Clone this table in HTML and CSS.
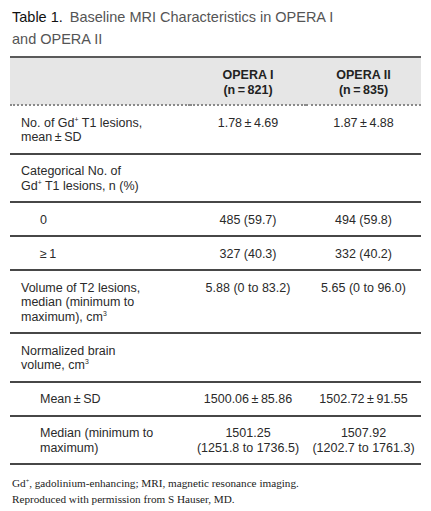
FILE: index.html
```html
<!DOCTYPE html>
<html lang="en">
<head>
<meta charset="utf-8">
<title>Table 1. Baseline MRI Characteristics in OPERA I and OPERA II</title>
<link rel="stylesheet" href="styles.css">
</head>
<body>
<div class="page">
  <h1 class="title"><span class="label">Table 1.</span><span class="t1">Baseline MRI Characteristics in OPERA I</span><br><span class="t2">and OPERA II</span></h1>
  <table class="data">
    <colgroup>
      <col class="c1"><col class="c2"><col class="c3">
    </colgroup>
    <thead>
      <tr>
        <th></th>
        <th>OPERA I<br>(n&#8201;=&#8201;821)</th>
        <th>OPERA II<br>(n&#8201;=&#8201;835)</th>
      </tr>
    </thead>
    <tbody>
      <tr>
        <td>No. of Gd<sup>+</sup> T1 lesions,<br>mean&#8201;±&#8201;SD</td>
        <td class="num">1.78&#8201;±&#8201;4.69</td>
        <td class="num">1.87&#8201;±&#8201;4.88</td>
      </tr>
      <tr>
        <td>Categorical No. of<br>Gd<sup>+</sup> T1 lesions, n (%)</td>
        <td class="num"></td>
        <td class="num"></td>
      </tr>
      <tr>
        <td class="sub">0</td>
        <td class="num">485 (59.7)</td>
        <td class="num">494 (59.8)</td>
      </tr>
      <tr>
        <td class="sub">≥&#8201;1</td>
        <td class="num">327 (40.3)</td>
        <td class="num">332 (40.2)</td>
      </tr>
      <tr>
        <td>Volume of T2 lesions,<br>median (minimum to<br>maximum), cm<sup>3</sup></td>
        <td class="num">5.88 (0 to 83.2)</td>
        <td class="num">5.65 (0 to 96.0)</td>
      </tr>
      <tr>
        <td>Normalized brain<br>volume, cm<sup>3</sup></td>
        <td class="num"></td>
        <td class="num"></td>
      </tr>
      <tr>
        <td class="sub">Mean&#8201;±&#8201;SD</td>
        <td class="num">1500.06&#8201;±&#8201;85.86</td>
        <td class="num">1502.72&#8201;±&#8201;91.55</td>
      </tr>
      <tr>
        <td class="sub">Median (minimum to<br>maximum)</td>
        <td class="num">1501.25<br>(1251.8 to 1736.5)</td>
        <td class="num">1507.92<br>(1202.7 to 1761.3)</td>
      </tr>
    </tbody>
  </table>
  <div class="notes">
    <p>Gd<sup>+</sup>, gadolinium-enhancing; MRI, magnetic resonance imaging.</p>
    <p>Reproduced with permission from S Hauser, MD.</p>
  </div>
</div>
</body>
</html>
```

FILE: styles.css
```css
html, body {
  margin: 0;
  padding: 0;
  background: #ffffff;
}

.page {
  padding: 6px 10px 0 10px;
  width: 411px;
  font-family: "Liberation Sans", Arial, sans-serif;
}

.title {
  margin: 0 0 6px 2px;
  font-size: 14.5px;
  line-height: 22px;
  font-weight: normal;
  color: #555555;
}

.title .label {
  color: #111111;
  margin-right: 7px;
}

.data {
  width: 411px;
  table-layout: fixed;
  border-collapse: collapse;
  font-size: 12.5px;
  line-height: 14.5px;
  color: #2a2a2a;
  border-top: 2px solid #5a5a5a;
}

.c1 { width: 180px; }
.c2 { width: 116px; }
.c3 { width: 115px; }

.data thead th {
  background: #e6e6e6;
  font-weight: bold;
  color: #222222;
  text-align: center;
  padding: 10px 0 7px 0;
  border-bottom: 2px dotted #8a8a8a;
}

.data tbody td {
  vertical-align: top;
  padding: 9.5px 0 8px 11px;
  border-bottom: 2px solid #474747;
}

.data tbody td.num {
  text-align: center;
  padding-left: 0;
}

.data tbody td.sub {
  padding-left: 30px;
}

sup {
  font-size: 0.55em;
  line-height: 0;
  vertical-align: 0.7em;
}

.notes {
  margin-top: 10px;
  margin-left: 2px;
  font-family: "Liberation Serif", "Times New Roman", serif;
  font-size: 11.2px;
  line-height: 16px;
  color: #222222;
}

.notes p {
  margin: 0;
}
```
